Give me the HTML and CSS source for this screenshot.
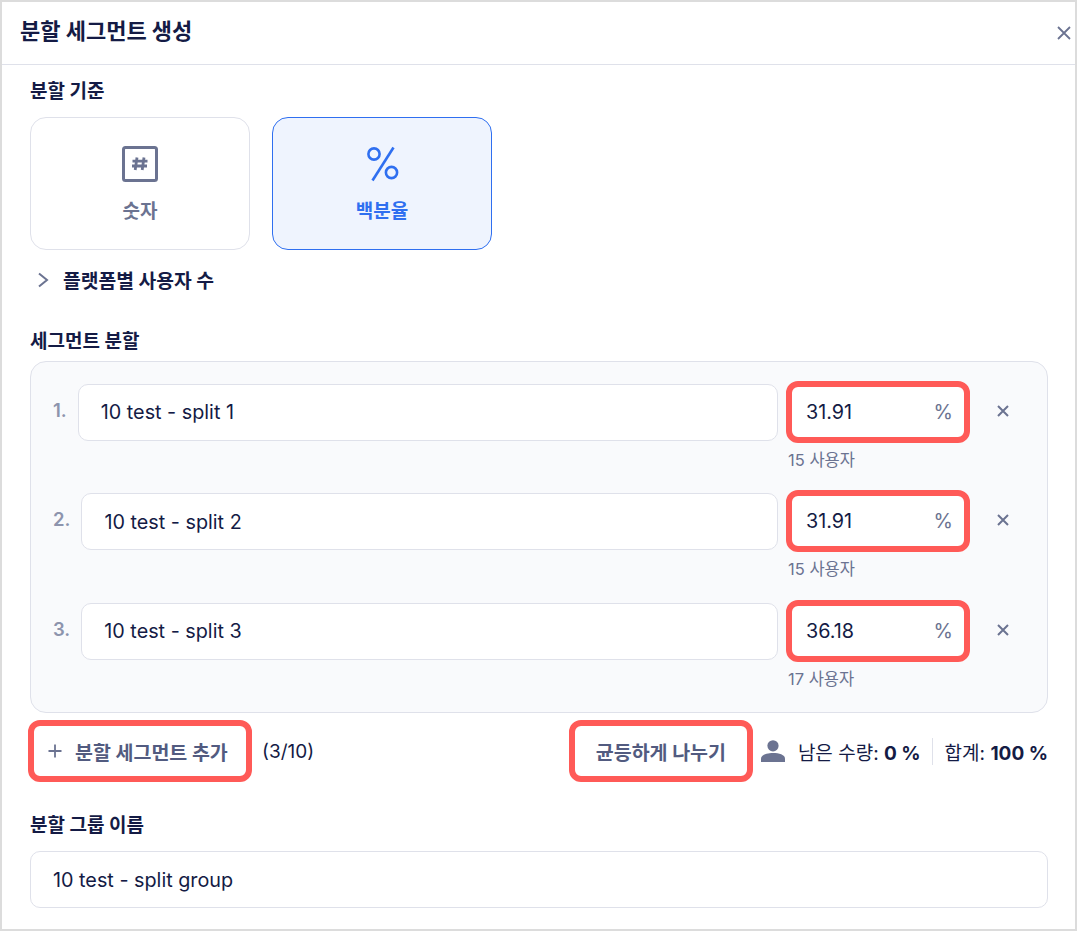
FILE: index.html
```html
<!DOCTYPE html>
<html lang="ko">
<head>
  <meta charset="UTF-8">
  <meta name="viewport" content="width=device-width, initial-scale=1.0">
  <title>분할 세그먼트 생성</title>
  <link rel="stylesheet" href="styles.css">
</head>
<body>
  <div class="modal">
    <div class="modal-header">
      <h1>분할 세그먼트 생성</h1>
      <svg class="close-icon" width="16" height="16" viewBox="0 0 16 16"><path d="M2 2l12 12M14 2L2 14"/></svg>
    </div>

    <div class="modal-body">
      <h2 class="section-label label-first">분할 기준</h2>
      <div class="type-cards">
        <div class="type-card">
          <svg class="type-icon" width="38" height="38" viewBox="0 0 38 38">
            <rect x="2.5" y="2.5" width="33" height="33" rx="2" class="hash-box"/>
            <path d="M16 12.500l-1.800 12.500M23 12.500L21.200 25M11.500 16.200h15M11 21h15" class="hash-mark"/>
          </svg>
          <span>숫자</span>
        </div>
        <div class="type-card active">
          <svg class="type-icon" width="38" height="38" viewBox="0 0 38 38">
            <circle cx="11" cy="9" r="5.6"/>
            <circle cx="28.500" cy="27.500" r="5.600"/>
            <path d="M30.500 2.500L9.500 35.500"/>
          </svg>
          <span>백분율</span>
        </div>
      </div>

      <div class="platform-toggle">
        <svg width="12" height="16" viewBox="0 0 12 16"><path d="M2 1.500L10 8l-8 6.500"/></svg>
        <span>플랫폼별 사용자 수</span>
      </div>

      <h2 class="section-label label-split">세그먼트 분할</h2>
      <div class="split-panel">
        <div class="split-row">
          <span class="row-num">1.</span>
          <div class="field name-field">10 test - split 1</div>
          <div class="percent-col">
            <div class="percent-field marked"><span>31.91</span><span class="unit">%</span></div>
            <div class="user-count">15 사용자</div>
          </div>
          <svg class="remove-icon" width="12" height="12" viewBox="0 0 12 12"><path d="M1 1l10 10M11 1L1 11"/></svg>
        </div>
        <div class="split-row">
          <span class="row-num">2.</span>
          <div class="field name-field">10 test - split 2</div>
          <div class="percent-col">
            <div class="percent-field marked"><span>31.91</span><span class="unit">%</span></div>
            <div class="user-count">15 사용자</div>
          </div>
          <svg class="remove-icon" width="12" height="12" viewBox="0 0 12 12"><path d="M1 1l10 10M11 1L1 11"/></svg>
        </div>
        <div class="split-row">
          <span class="row-num">3.</span>
          <div class="field name-field">10 test - split 3</div>
          <div class="percent-col">
            <div class="percent-field marked"><span>36.18</span><span class="unit">%</span></div>
            <div class="user-count">17 사용자</div>
          </div>
          <svg class="remove-icon" width="12" height="12" viewBox="0 0 12 12"><path d="M1 1l10 10M11 1L1 11"/></svg>
        </div>
      </div>

      <div class="split-actions">
        <button class="action-btn add-btn marked">
          <svg width="14" height="14" viewBox="0 0 14 14"><path d="M7 .5v13M.5 7h13"/></svg>
          <span>분할 세그먼트 추가</span>
        </button>
        <span class="split-count">(3/10)</span>
        <button class="action-btn even-btn marked">균등하게 나누기</button>
        <svg class="person-icon" width="24" height="22" viewBox="0 0 24 22">
          <circle cx="12" cy="5.800" r="5.600"/>
          <path d="M0 22v-3.500C0 14.800 6 13 12 13s12 1.800 12 5.500V22z"/>
        </svg>
        <span class="summary">남은 수량: <b>0 %</b></span>
        <span class="summary summary-total">합계: <b>100 %</b></span>
      </div>

      <h2 class="section-label label-group">분할 그룹 이름</h2>
      <div class="field group-field">10 test - split group</div>
    </div>
  </div>
</body>
</html>
```

FILE: styles.css
```css
* {
  box-sizing: border-box;
}

body {
  margin: 0;
  font-family: Inter, "Noto Sans CJK KR", sans-serif;
  color: #141b45;
  background: #fff;
}

.modal {
  width: 1077px;
  height: 931px;
  border: 2px solid #dcdcdc;
  overflow: hidden;
  background: #fff;
}

.modal-header {
  display: flex;
  align-items: center;
  justify-content: space-between;
  height: 63px;
  padding: 0 3px 8px 18px;
  border-bottom: 1px solid #dfe1ea;
}

.modal-header h1 {
  margin: 0;
  font-size: 22px;
  font-weight: 700;
}

.close-icon {
  margin-top: 8px;
}

.close-icon path {
  fill: none;
  stroke: #6b7391;
  stroke-width: 1.800;
}

.modal-body {
  padding: 0 27px 0 28px;
}

.section-label {
  margin: 0;
  font-size: 19px;
  line-height: 24px;
  font-weight: 700;
}

.label-first {
  margin-top: 15px;
}

.type-cards {
  display: flex;
  gap: 22px;
  margin-top: 13px;
}

.type-card {
  display: flex;
  flex-direction: column;
  align-items: center;
  width: 220px;
  height: 133px;
  padding-top: 27px;
  border: 1px solid #dfe1ea;
  border-radius: 16px;
  font-size: 19px;
  font-weight: 700;
  color: #6b7391;
}

.type-card span {
  margin-top: 17px;
  line-height: 24px;
}

.type-icon {
  display: block;
}

.hash-box {
  fill: none;
  stroke: #6b7391;
  stroke-width: 3;
}

.hash-mark {
  fill: none;
  stroke: #6b7391;
  stroke-width: 2.800;
}

.type-card.active {
  border-color: #2f6ff0;
  background: #eff4fe;
  color: #2f6ff0;
}

.type-card.active .type-icon {
  fill: none;
  stroke: #2f6ff0;
  stroke-width: 2.600;
}

.platform-toggle {
  display: flex;
  align-items: center;
  gap: 14px;
  margin: 18px 0 0 7px;
  height: 24px;
  font-size: 19.300px;
  font-weight: 700;
}

.platform-toggle svg path {
  fill: none;
  stroke: #6b7391;
  stroke-width: 2;
}

.label-split {
  margin-top: 38px;
}

.split-panel {
  height: 352px;
  margin-top: 7px;
  padding: 18.900px 38px 0 22px;
  border: 1px solid #dfe1ea;
  border-radius: 16px;
  background: #f9fafc;
}

.split-row {
  display: flex;
  align-items: flex-start;
  height: 109.500px;
}

.row-num {
  margin-top: 17px;
  margin-right: 11px;
  font-size: 18.500px;
  line-height: 24px;
  font-weight: 600;
  color: #8d94ad;
}

.field {
  display: flex;
  align-items: center;
  height: 57px;
  border: 1px solid #dfe1ea;
  border-radius: 10px;
  background: #fff;
  font-size: 19.800px;
}

.name-field {
  flex: 1;
  margin-top: 3px;
  padding-left: 22px;
}

.percent-col {
  width: 184px;
  margin-left: 8px;
}

.percent-field {
  display: flex;
  align-items: center;
  justify-content: space-between;
  height: 62px;
  padding: 0 11px 0 14px;
  background: #fff;
  font-size: 19.800px;
}

.marked {
  border: 6px solid #ff5a57;
  border-radius: 12px;
}

.unit {
  color: #6b7391;
}

.user-count {
  margin: 7px 0 0 2px;
  font-size: 16.500px;
  line-height: 20px;
  color: #6b7391;
}

.remove-icon {
  margin: 24px 0 0 27px;
}

.remove-icon path {
  fill: none;
  stroke: #6b7391;
  stroke-width: 2;
}

.split-actions {
  display: flex;
  align-items: center;
  height: 62px;
  margin-top: 7px;
  font-size: 19px;
}

.action-btn {
  display: flex;
  align-items: center;
  height: 62px;
  background: #fff;
  font-family: inherit;
  font-size: 19.500px;
  font-weight: 700;
  color: #525b80;
}

.add-btn {
  gap: 13px;
  width: 224px;
  margin-left: -2px;
  padding: 0 0 0 14px;
  white-space: nowrap;
}

.add-btn path {
  fill: none;
  stroke: #6b7391;
  stroke-width: 1.800;
}

.split-count {
  margin-left: 10px;
}

.even-btn {
  justify-content: center;
  width: 184px;
  margin-left: auto;
  padding: 0;
  white-space: nowrap;
}

.person-icon {
  margin-left: 8px;
  fill: #6b7391;
}

.summary {
  margin-left: 13px;
  white-space: nowrap;
}

.summary b {
  font-weight: 700;
}

.summary-total {
  margin-left: 11px;
  padding-left: 12px;
  border-left: 1px solid #dfe1ea;
}

.label-group {
  margin-top: 32px;
}

.group-field {
  margin-top: 13px;
  padding-left: 22px;
}
```
